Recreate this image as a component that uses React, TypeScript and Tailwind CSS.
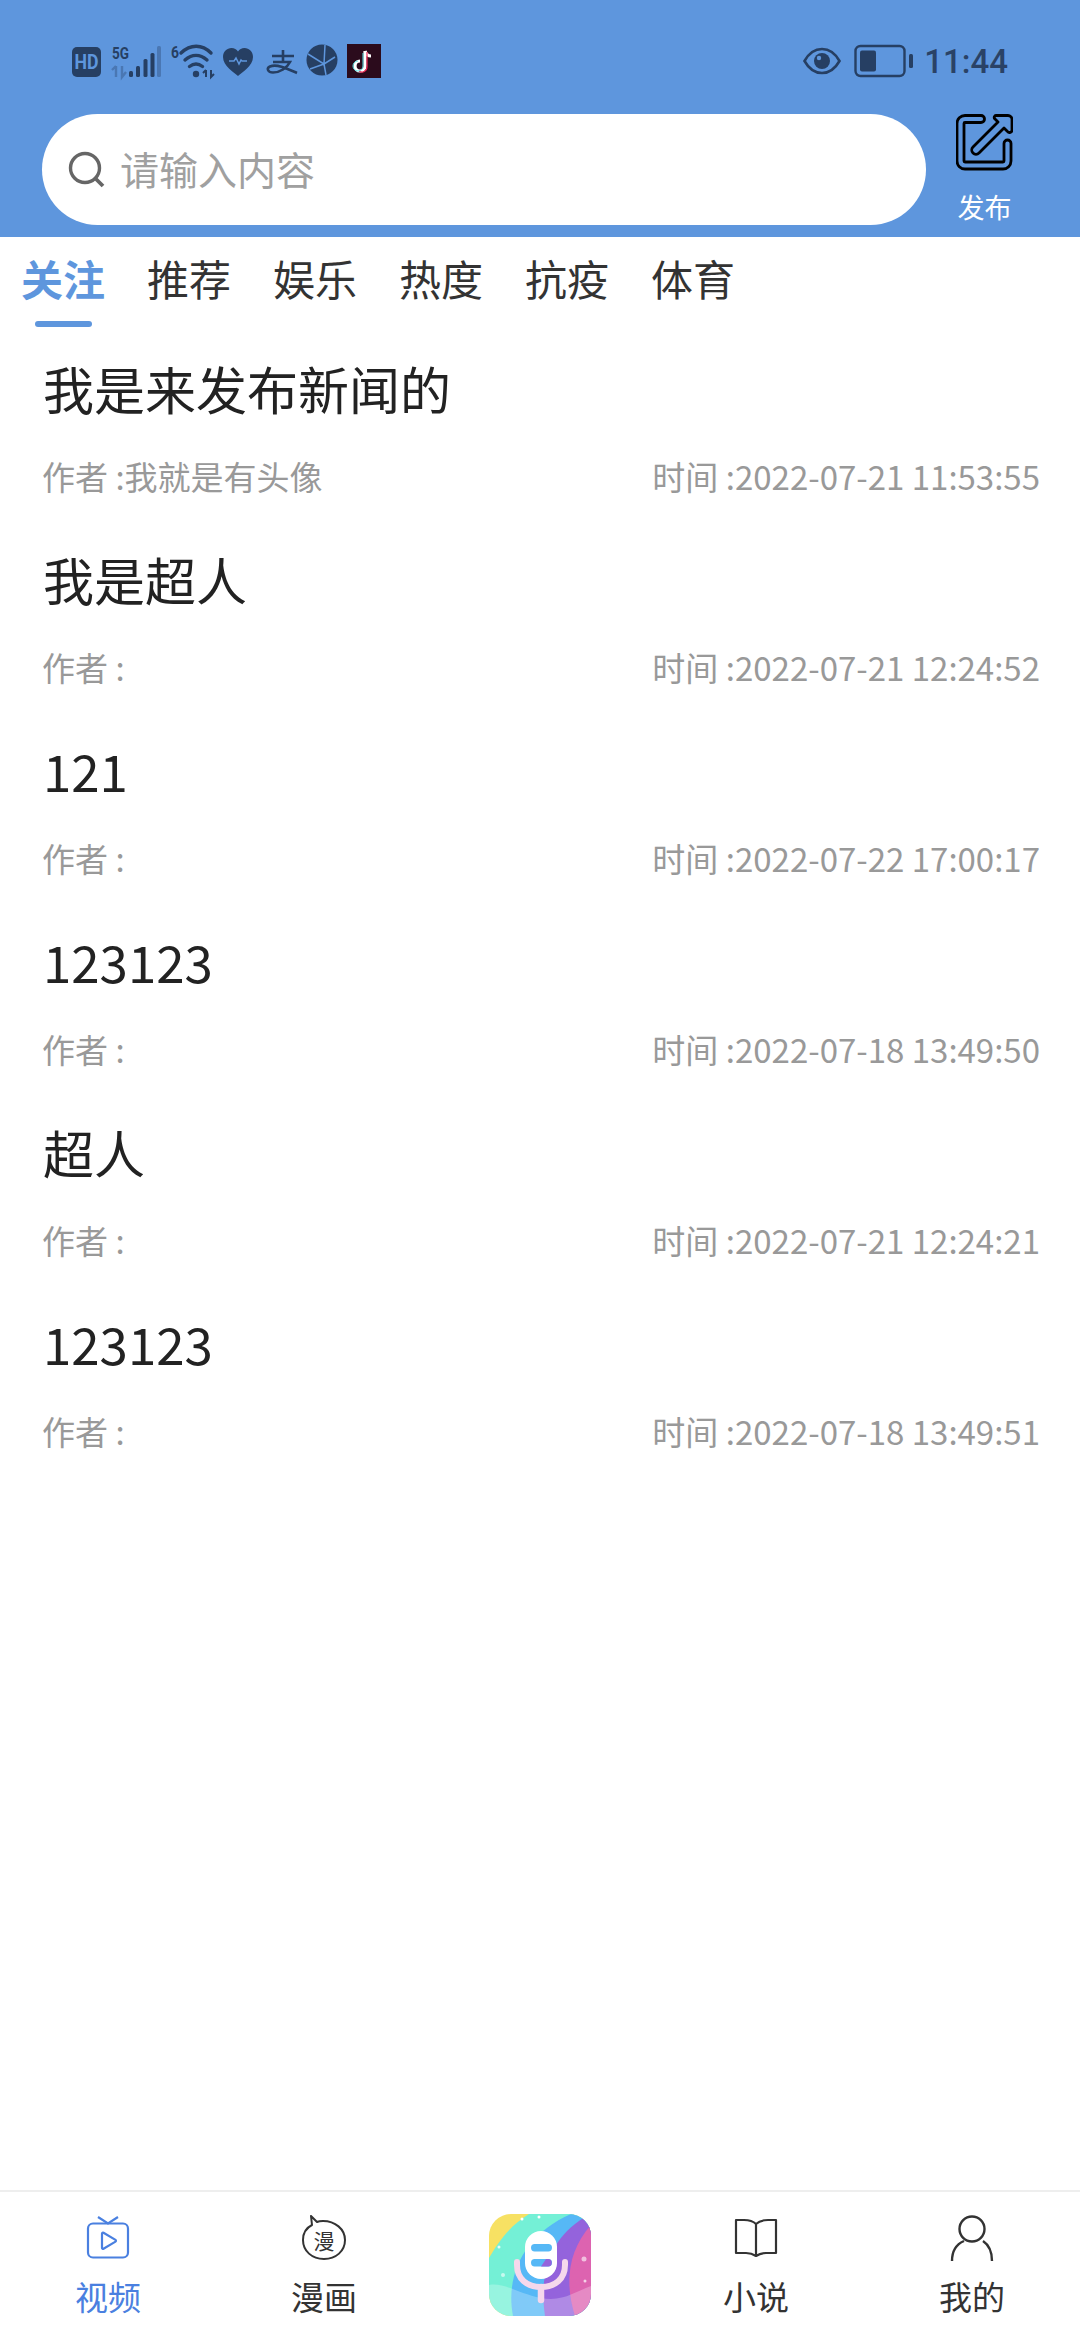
import React from 'react';

const FONT = "font-['Noto_Sans_CJK_SC','Noto_Sans',sans-serif]";

const tabs = ['关注', '推荐', '娱乐', '热度', '抗疫', '体育'];

const newsItems = [
  { title: '我是来发布新闻的', author: '我就是有头像', time: '2022-07-21 11:53:55' },
  { title: '我是超人', author: '', time: '2022-07-21 12:24:52' },
  { title: '121', author: '', time: '2022-07-22 17:00:17' },
  { title: '123123', author: '', time: '2022-07-18 13:49:50' },
  { title: '超人', author: '', time: '2022-07-21 12:24:21' },
  { title: '123123', author: '', time: '2022-07-18 13:49:51' },
];

function StatusLeft() {
  return (
    <svg width="320" height="40" viewBox="0 0 320 40" className="block">
      {/* HD */}
      <rect x="3" y="6" width="29" height="30" rx="5" fill="#263f63" />
      <text x="17.500" y="27.500" textAnchor="middle" fontSize="20" fontWeight="700" fill="#5e96dd" fontFamily="Roboto" textLength="24" lengthAdjust="spacingAndGlyphs">HD</text>
      {/* 5G signal */}
      <text x="43" y="17.500" fontSize="17" fontWeight="700" fill="#263f63" fontFamily="Roboto" textLength="17" lengthAdjust="spacingAndGlyphs">5G</text>
      <path d="M47 25v11M43 29l4-4M53 25v11l4-5" stroke="#263f63" strokeOpacity="0.35" strokeWidth="2.400" fill="none" />
      <rect x="60" y="30" width="4" height="6" rx="1.500" fill="#263f63" />
      <rect x="67" y="25" width="4" height="11" rx="1.500" fill="#263f63" />
      <rect x="74.500" y="18" width="4" height="18" rx="1.500" fill="#263f63" />
      <rect x="81.500" y="12" width="4" height="24" rx="1.500" fill="#263f63" />
      <rect x="88" y="5" width="4" height="31" rx="1.500" fill="#263f63" fillOpacity="0.35" />
      {/* wifi */}
      <text x="102" y="17" fontSize="17" fontWeight="700" fill="#263f63" fontFamily="Roboto" textLength="8" lengthAdjust="spacingAndGlyphs">6</text>
      <path d="M112 12c9.500-9 21-9 30 0" stroke="#263f63" strokeWidth="3.400" fill="none" strokeLinecap="round" />
      <path d="M116 19c7-6 15-6 22 0" stroke="#263f63" strokeWidth="3.400" fill="none" strokeLinecap="round" />
      <path d="M120.500 25.500c4-3 9-3 13 0" stroke="#263f63" strokeWidth="3.400" fill="none" strokeLinecap="round" />
      <circle cx="127" cy="33" r="3.200" fill="#263f63" />
      <path d="M137 29v7M134 32l3-3M142 29v7l3-3" stroke="#263f63" strokeWidth="2" fill="none" />
      {/* heart */}
      <path d="M169 35c-4-3.500-15-10-15-19 0-5.500 4-9 8.500-9 3 0 5 1.500 6.500 3.500 1.500-2 3.500-3.500 6.500-3.500 4.500 0 8.500 3.500 8.500 9 0 9-11 15.500-15 19z" fill="#263f63" />
      <path d="M160 20h5l2-3 3 6 2-4 1 1h5" stroke="#5e96dd" strokeWidth="1.500" fill="none" />
      {/* alipay */}
      <path d="M203 15h22M214 9v13M204 21h17c-3 6-10 10.500-17 10.500-5 0-7-4-3-6 7-3 17 2 27 6.500" stroke="#263f63" strokeWidth="2.600" fill="none" />
      {/* globe */}
      <circle cx="253" cy="19" r="15.500" fill="#263f63" />
      <path d="M239 13l16 10 2 11M256 4l-1 19 11-7M241 28l14-5" stroke="#5e96dd" strokeWidth="1.500" fill="none" />
      {/* tiktok */}
      <rect x="278" y="3" width="34" height="34" fill="#2b0b1c" />
      <path d="M296 10v15a5 5 0 1 1-5-5M296 10c1 3 3 5 6 5" stroke="#fff" strokeWidth="3.200" fill="none" />
      <path d="M298 11v15a5 5 0 0 1-8 4" stroke="#ee2a55" strokeWidth="1.200" fill="none" />
      <path d="M294 12v13a5 5 0 1 1-5-5" stroke="#5fe3e6" strokeWidth="1" fill="none" />
    </svg>
  );
}

function StatusRight() {
  return (
    <div className="flex items-center">
      <svg width="38" height="30" viewBox="0 0 38 30">
        <path d="M1.500 15C6 7 12 3 19 3s13 4 17.500 12C32 23 26 27 19 27S6 23 1.500 15z" fill="none" stroke="#263f63" strokeWidth="2.600" />
        <circle cx="19" cy="15" r="8" fill="#263f63" />
        <circle cx="16" cy="12" r="2.200" fill="#5e96dd" />
      </svg>
      <svg width="60" height="34" viewBox="0 0 60 34" className="ml-[13px]">
        <rect x="1.500" y="2" width="49" height="30" rx="5" fill="none" stroke="#263f63" strokeWidth="2.400" />
        <rect x="6" y="6.500" width="16" height="21" rx="2" fill="#263f63" />
        <rect x="55" y="10" width="4" height="14" rx="1.500" fill="#263f63" />
      </svg>
      <span className="ml-[10px] font-['Roboto',sans-serif] text-[33px] leading-none font-medium text-[#2a4266]">11:44</span>
    </div>
  );
}

function SearchIcon() {
  return (
    <svg width="40" height="40" viewBox="0 0 40 40" className="shrink-0">
      <circle cx="18" cy="18" r="14.500" fill="none" stroke="#666666" strokeWidth="3.400" />
      <path d="M28.500 28.500L36 36" stroke="#666666" strokeWidth="3.800" />
    </svg>
  );
}

function PublishIcon() {
  return (
    <svg width="57" height="57" viewBox="0 0 57 57">
      <path d="M9 1.500H25a3.500 3.500 0 0 1 0 7H9a1 1 0 0 0-1 1V47a1 1 0 0 0 1 1H47a1 1 0 0 0 1-1V29.500a3.500 3.500 0 0 1 7 0V47a8 8 0 0 1-8 8H9a8 8 0 0 1-8-8V9.500a8 8 0 0 1 8-8z" fill="none" stroke="#000" strokeWidth="2.800" />
      <path d="M40 1.500H52a4 4 0 0 1 4 4V16a2.500 2.500 0 0 1-4.500 1.500L48 14L23 39a4 4 0 0 1-6-6L42 8L38.500 4.500A2 2 0 0 1 40 1.500z" fill="none" stroke="#000" strokeWidth="2.800" strokeLinejoin="round" />
    </svg>
  );
}

function VideoIcon() {
  return (
    <svg width="44" height="44" viewBox="0 0 44 44">
      <rect x="2" y="7.500" width="40" height="34" rx="5" fill="none" stroke="#4a80e0" strokeWidth="2.200" />
      <path d="M12 1l10 6.500L32 1" fill="none" stroke="#4a80e0" strokeWidth="2.200" />
      <path d="M16 17.500v14.500a1 1 0 0 0 1.500 .8l12-7.200a1 1 0 0 0 0-1.700l-12-7.200a1 1 0 0 0-1.500 .8z" fill="none" stroke="#4a80e0" strokeWidth="2.200" strokeLinejoin="round" />
    </svg>
  );
}

function ComicIcon() {
  return (
    <svg width="44" height="46" viewBox="0 0 44 46">
      <path d="M9 1l1 9C4 13 1 19 1 25c0 11 9 19 21 19s21-8 21-19S33 6 21 6c-3 0-5 .5-6 1z" fill="none" stroke="#333" strokeWidth="2" strokeLinejoin="round" />
      <text x="22" y="34" textAnchor="middle" fontSize="21" fill="#333" fontFamily="Noto Sans CJK SC">漫</text>
    </svg>
  );
}

function BookIcon() {
  return (
    <svg width="44" height="40" viewBox="0 0 44 40">
      <path d="M22 6c-3-3-7-4-12-4H2v33h10c4 0 7 1 10 3 3-2 6-3 10-3h10V2h-8c-5 0-9 1-12 4zm0 0v32" fill="none" stroke="#333" strokeWidth="2.200" strokeLinejoin="round" />
    </svg>
  );
}

function UserIcon() {
  return (
    <svg width="44" height="48" viewBox="0 0 44 48">
      <circle cx="22" cy="15" r="12.500" fill="none" stroke="#333" strokeWidth="2.400" />
      <path d="M2 47c0-10 5-17 12-20M42 47c0-9-3-16-9-20" fill="none" stroke="#333" strokeWidth="2.400" />
    </svg>
  );
}

function MicLogo() {
  return (
    <svg width="102" height="102" viewBox="0 0 102 102">
      <defs>
        <clipPath id="logoClip">
          <rect x="0" y="0" width="102" height="102" rx="22" />
        </clipPath>
      </defs>
      <g clipPath="url(#logoClip)">
        <rect width="102" height="102" fill="#f7e163" />
        <path d="M0 44C8 30 20 12 40 0H102V102H0z" fill="#74f0d6" />
        <path d="M24 102C16 60 36 20 82 0H102V102z" fill="#56b8f6" />
        <path d="M56 102C50 60 60 25 96 3L102 8V102z" fill="#9463dc" />
        <path d="M86 102C76 70 78 38 102 11V102z" fill="#dd63b0" />
        <path d="M0 71C15 68 30 80 52 84S85 78 102 72V102H0z" fill="#ffffff" fillOpacity="0.25" />
        <path d="M28 48v3c0 14 10 22 24 22s24-8 24-22v-3" fill="none" stroke="#f5d8ec" strokeWidth="6" strokeLinecap="round" />
        <path d="M52 73v13" stroke="#f5d8ec" strokeWidth="6.500" strokeLinecap="round" />
        <rect x="36" y="17" width="32" height="48" rx="16" fill="#ffffff" />
        <rect x="42" y="30" width="21" height="7.500" rx="3.700" fill="#56b8f6" />
        <rect x="42" y="45" width="21" height="7.500" rx="3.700" fill="#56b8f6" />
        <path d="M52 52.500l5-7.500h2a3.700 3.700 0 0 1 0 7.500z" fill="#9463dc" />
        <circle cx="33" cy="5" r="1.500" fill="#fff" />
        <circle cx="50" cy="3" r="1.500" fill="#fff" />
        <circle cx="10" cy="33" r="1.500" fill="#fff" fillOpacity="0.8" />
        <circle cx="14" cy="61" r="2" fill="#fff" fillOpacity="0.6" />
        <circle cx="95" cy="45" r="2.500" fill="#fff" fillOpacity="0.6" />
        <circle cx="96" cy="67" r="1.500" fill="#fff" fillOpacity="0.7" />
      </g>
    </svg>
  );
}

function NavItem({ icon, label, active }: { icon: React.ReactNode; label: string; active?: boolean }) {
  return (
    <div className="flex flex-1 flex-col items-center">
      <div className="flex h-[47px] items-center justify-center">{icon}</div>
      <span className={`mt-[10px] text-[33px] leading-[50px] ${active ? 'text-[#4a80e0]' : 'text-[#333333]'}`}>
        {label}
      </span>
    </div>
  );
}

export default function App() {
  return (
    <div className={`flex h-[2340px] w-[1080px] flex-col overflow-hidden bg-white ${FONT}`}>
      {/* Header */}
      <div className="h-[237px] shrink-0 bg-[#5e96dd]">
        <div className="flex h-[114px] items-center justify-between pt-[8px] pr-[72px] pl-[69px]">
          <StatusLeft />
          <StatusRight />
        </div>
        <div className="flex items-start pr-[37px] pl-[42px]">
          <div className="flex h-[111px] w-[884px] items-center rounded-full bg-white pl-[25px]">
            <SearchIcon />
            <span className="ml-[13px] pb-[2px] text-[39px] leading-none text-[#a0a0a0]">请输入内容</span>
          </div>
          <div className="flex flex-1 flex-col items-center">
            <PublishIcon />
            <span className="mt-[16px] text-[27px] leading-[40px] text-white">发布</span>
          </div>
        </div>
      </div>

      {/* Tabs */}
      <div className="flex shrink-0 gap-[42px] pl-[21px]">
        {tabs.map((tab, i) => (
          <div key={tab} className="flex h-[90px] w-[84px] flex-col items-center">
            <span className={`mt-[13px] text-[42px] leading-[56px] ${i === 0 ? 'font-bold text-[#5e96dd]' : 'text-[#333333]'}`}>
              {tab}
            </span>
            {i === 0 && <div className="mt-[15px] h-[6px] w-[57px] rounded-full bg-[#5e96dd]" />}
          </div>
        ))}
      </div>

      {/* News list */}
      <div className="flex-1 pt-[4px]">
        {newsItems.map((item, i) => (
          <div key={i} className="h-[191px] px-[40px]">
            <div className="px-[3px] text-[51px] leading-[115px] text-[#222222]">{item.title}</div>
            <div className="flex justify-between text-[33px] leading-[60px] text-[#999999]">
              <span className="pl-[2px]">作者 :{item.author}</span>
              <span>时间 :{item.time}</span>
            </div>
          </div>
        ))}
      </div>

      {/* Bottom nav */}
      <div className="flex h-[150px] shrink-0 border-t-2 border-[#eeeeee] pt-[22px]">
        <NavItem icon={<VideoIcon />} label="视频" active />
        <NavItem icon={<ComicIcon />} label="漫画" />
        <div className="flex flex-1 justify-center">
          <MicLogo />
        </div>
        <NavItem icon={<BookIcon />} label="小说" />
        <NavItem icon={<UserIcon />} label="我的" />
      </div>
    </div>
  );
}
